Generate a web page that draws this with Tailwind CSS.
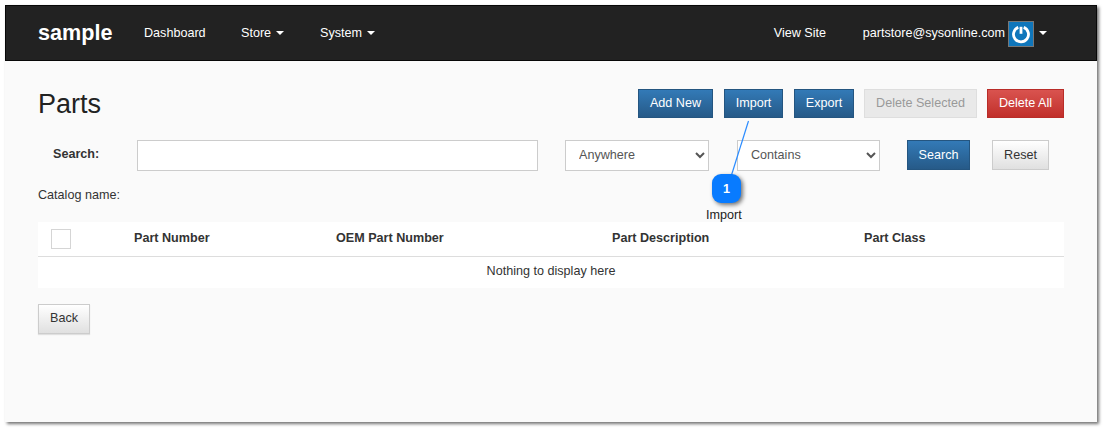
<!doctype html>
<html>
<head>
<meta charset="utf-8">
<script src="https://cdn.jsdelivr.net/npm/@tailwindcss/browser@4"></script>
</head>
<body class="bg-white font-['Liberation_Sans',Arial,sans-serif] text-[12.6px] leading-[18px] text-[#333]">
<div class="w-[1106px] h-[431px] pt-[5px] pl-[5px] overflow-hidden">
  <div class="relative w-[1092px] h-[417px] bg-[#fafafa] shadow-[2px_2px_3px_rgba(0,0,0,0.55)]">
    <nav class="h-[56px] bg-[#222] border border-[#080808] flex items-center pl-[32px] pr-[49px] pb-[1px] text-white">
      <span class="text-[21.6px] leading-[24px] font-bold w-[106px]">sample</span>
      <span class="w-[97px]">Dashboard</span>
      <span class="w-[79px] flex items-center gap-[5px]">Store <i class="w-0 h-0 border-x-[4px] border-x-transparent border-t-[4px] border-t-white"></i></span>
      <span class="flex items-center gap-[5px]">System <i class="w-0 h-0 border-x-[4px] border-x-transparent border-t-[4px] border-t-white"></i></span>
      <span class="ml-auto w-[89px]">View Site</span>
      <span>partstore@sysonline.com</span>
      <span class="ml-[3px] w-[26px] h-[26px] mt-[2px] bg-[#0f76bb] border border-[#777] flex items-center justify-center">
        <svg width="20" height="20" viewBox="0 0 20 20" fill="none" stroke="white" stroke-width="2.8" stroke-linecap="butt"><path d="M7.3 3.4a7.5 7.5 0 1 0 5.4 0"/><path d="M10 2.8v7"/></svg>
      </span>
      <i class="ml-[5px] w-0 h-0 border-x-[4px] border-x-transparent border-t-[4px] border-t-white"></i>
    </nav>

    <main class="px-[33px]">
      <div class="flex items-start justify-between pt-[24px]">
        <h1 class="text-[27px] leading-[36px] mt-[1px] text-[#222]">Parts</h1>
        <div class="flex mt-[4px]">
          <button class="h-[29px] w-[75px] pb-[2px] text-white bg-linear-to-b from-[#337ab7] to-[#265a88] border border-[#245580]">Add New</button>
          <button class="h-[29px] w-[59px] ml-[11px] pb-[2px] text-white bg-linear-to-b from-[#337ab7] to-[#265a88] border border-[#245580]">Import</button>
          <button class="h-[29px] w-[60px] ml-[11px] pb-[2px] text-white bg-linear-to-b from-[#337ab7] to-[#265a88] border border-[#245580]">Export</button>
          <button class="h-[29px] w-[113px] ml-[10px] pb-[2px] text-[#999] bg-[#e9e9e9] border border-[#dedede]">Delete Selected</button>
          <button class="h-[29px] w-[77px] ml-[10px] pb-[2px] text-white bg-linear-to-b from-[#d9534f] to-[#c12e2a] border border-[#b92c28]">Delete All</button>
        </div>
      </div>

      <div class="flex items-start mt-[18px]">
        <label class="font-bold w-[99px] pl-[15px] pt-[5px]">Search:</label>
        <input class="w-[401px] h-[31px] bg-white border border-[#ccc]" type="text">
        <select class="w-[144px] h-[31px] ml-[27px] pl-[9px] pb-[2px] bg-white border border-[#ccc] text-[#555]"><option>Anywhere</option></select>
        <select class="w-[143px] h-[31px] ml-[28px] pl-[9px] pb-[2px] bg-white border border-[#ccc] text-[#555]"><option>Contains</option></select>
        <button class="w-[63px] h-[30px] ml-[27px] pb-[1px] text-white bg-linear-to-b from-[#337ab7] to-[#265a88] border border-[#245580]">Search</button>
        <button class="w-[57px] h-[30px] ml-[22px] pb-[1px] bg-linear-to-b from-white to-[#e0e0e0] border border-[#ccc]">Reset</button>
      </div>

      <p class="mt-[15px] text-[#333]">Catalog name:</p>

      <table class="mt-[18px] w-[1026px] bg-white table-fixed border-collapse">
        <thead>
          <tr class="h-[34px] border-b border-[#ddd] text-left">
            <th class="w-[96px] pl-[13px] font-normal"><span class="block w-[20px] h-[20px] border border-[#d5d5d5] bg-white"></span></th>
            <th class="w-[202px] font-bold pb-[2px]">Part Number</th>
            <th class="w-[276px] font-bold pb-[2px]">OEM Part Number</th>
            <th class="w-[252px] font-bold pb-[2px]">Part Description</th>
            <th class="font-bold pb-[2px]">Part Class</th>
          </tr>
        </thead>
        <tbody>
          <tr class="h-[32px]"><td colspan="5" class="text-center pb-[2px]">Nothing to display here</td></tr>
        </tbody>
      </table>

      <button class="mt-[16px] w-[52px] h-[30px] pb-[3px] bg-linear-to-b from-white to-[#e0e0e0] border border-[#ccc] shadow-[0_1px_1px_rgba(0,0,0,0.1)]">Back</button>
    </main>

    <svg class="absolute left-[720px] top-[110px]" width="30" height="65" viewBox="0 0 30 65" fill="none"><path d="M23.5 6 6.5 60" stroke="#2b8cff" stroke-width="1.2"/></svg>
    <div class="absolute left-[707px] top-[169px] w-[29px] h-[29px] rounded-[9px] bg-[#087bff] text-white font-bold text-[12.6px] flex items-center justify-center shadow-[2px_2px_4px_rgba(0,0,0,0.55)]">1</div>
    <div class="absolute left-[701px] top-[201px] text-[#222]">Import</div>
  </div>
</div>
</body>
</html>
